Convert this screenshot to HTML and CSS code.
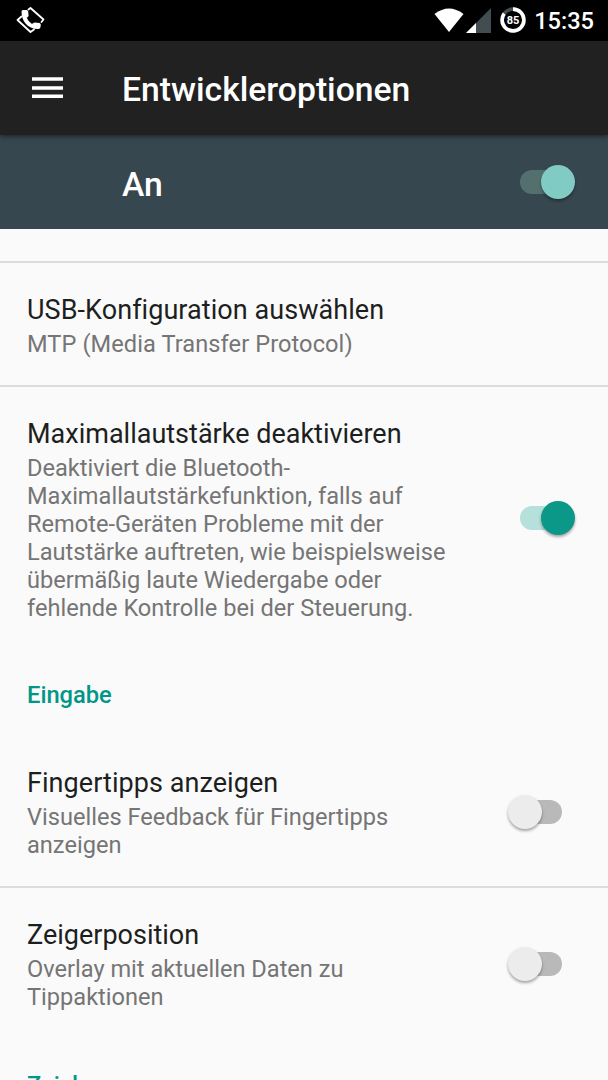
FILE: index.html
```html
<!DOCTYPE html>
<html lang="de">
<head>
<meta charset="utf-8">
<title>Entwickleroptionen</title>
<link rel="stylesheet" href="styles.css">
</head>
<body>
<div class="screen">
  <div class="status">
    <svg class="call-icon" viewBox="0 0 30 28" width="30" height="28">
      <g fill="none" stroke="#fff" stroke-width="1.800" stroke-linejoin="round" stroke-linecap="round">
        <path d="M12.500 3.500 L14.500 2 L27.500 13.500 L25.500 16"/>
        <path d="M5.500 10.500 L1.500 14 L14.500 26 L18 23.500"/>
      </g>
      <path fill="#fff" d="M5.500 5.500 Q5.500 4 7 4 H10.500 Q12 4 12.200 5.500 L12.600 9.500 Q12.600 10.800 10.800 11.800 Q12 15.500 16 18 Q17.500 16.200 19 16.400 L23.500 17 Q25 17.400 24.800 19 L24.300 21.700 Q23.800 23 21.800 23 C11.500 23 5.500 15 5.500 5.500Z"/>
    </svg>
    <div class="status-right">
      <svg class="wifi" viewBox="0 0 30 24" width="30" height="24"><path fill="#fff" d="M.5 6 Q15-5 29.500 6 L15 24Z"/></svg>
      <svg class="signal" viewBox="0 0 25 25" width="25" height="25"><path fill="#434c51" d="M25 0V25H0Z"/><path fill="#fff" d="M10 15V25H0Z"/></svg>
      <div class="battery">
        <svg viewBox="0 0 26 26" width="26" height="26"><circle cx="13" cy="13" r="10.900" fill="none" stroke="#434c51" stroke-width="3.600"/><circle cx="13" cy="13" r="10.900" fill="none" stroke="#fff" stroke-width="3.600" pathLength="100" stroke-dasharray="85 15" transform="rotate(-90 13 13)"/></svg>
        <span class="battery-level">85</span>
      </div>
      <span class="clock">15:35</span>
    </div>
  </div>
  <header class="toolbar">
    <svg class="menu" viewBox="0 0 31 22" width="31" height="22"><path fill="#fff" d="M0 .3H31V3.800H0ZM0 9.300H31V12.800H0ZM0 17.500H31V21H0Z"/></svg>
    <h1 class="heading">Entwickleroptionen</h1>
  </header>
  <div class="master">
    <span class="heading">An</span>
    <span class="switch on light"><i class="thumb"></i></span>
  </div>
  <main class="list">
    <section class="row">
      <div class="copy">
        <div class="title wide">USB-Konfiguration auswählen</div>
        <div class="summary wide">MTP (Media Transfer Protocol)</div>
      </div>
    </section>
    <section class="row">
      <div class="copy">
        <div class="title">Maximallautstärke deaktivieren</div>
        <div class="summary">Deaktiviert die Bluetooth-<br>Maximallautstärkefunktion, falls auf<br>Remote-Geräten Probleme mit der<br>Lautstärke auftreten, wie beispielsweise<br>übermäßig laute Wiedergabe oder<br>fehlende Kontrolle bei der Steuerung.</div>
      </div>
      <span class="switch on"><i class="thumb"></i></span>
    </section>
    <h2 class="category">Eingabe</h2>
    <section class="row first">
      <div class="copy">
        <div class="title wide">Fingertipps anzeigen</div>
        <div class="summary">Visuelles Feedback für Fingertipps<br>anzeigen</div>
      </div>
      <span class="switch off"><i class="thumb"></i></span>
    </section>
    <section class="row">
      <div class="copy">
        <div class="title">Zeigerposition</div>
        <div class="summary">Overlay mit aktuellen Daten zu<br>Tippaktionen</div>
      </div>
      <span class="switch off"><i class="thumb"></i></span>
    </section>
    <h2 class="category">Zeichnung</h2>
  </main>
</div>
</body>
</html>
```

FILE: styles.css
```css
* { box-sizing: border-box; }
body { margin: 0; background: #fafafa; font-family: Roboto, "Liberation Sans", sans-serif; }
.screen { height: 1080px; overflow: hidden; display: flex; flex-direction: column; }

.status { flex: none; height: 41px; background: #000; color: #fff; display: flex; justify-content: space-between; padding: 0 14px 0 16px; }
.call-icon { margin-top: 6px; }
.status-right { display: flex; align-items: flex-start; }
.wifi { margin-top: 8px; }
.signal { margin: 8px 0 0 2px; }
.battery { position: relative; width: 26px; height: 26px; margin: 7px 0 0 9px; }
.battery svg { display: block; }
.battery-level { position: absolute; inset: 0; text-align: center; font-size: 11px; line-height: 28px; font-weight: 700; }
.clock { margin-left: 8px; font-size: 23.6px; line-height: 43px; font-weight: 500; }

.toolbar { flex: none; height: 94px; background: #212121; color: #fff; display: flex; align-items: center; padding-left: 32px; position: relative; box-shadow: 0 1px 5px rgba(0,0,0,.55); }
.menu { flex: none; }
.heading { margin: 0; font-size: 33.7px; line-height: 40px; font-weight: 500; color: #fff; }
.toolbar .heading { margin-left: 59px; padding-top: 3px; }
.master { flex: none; height: 94px; background: #37474f; display: flex; align-items: center; justify-content: space-between; padding: 0 33px 0 122px; }
.master .heading { padding-top: 5px; }

.list { flex: 1; padding-top: 32px; }
.row { display: flex; align-items: center; justify-content: space-between; padding: 29px 33px 27px 27px; border-top: 2px solid #dcdcdc; }
.row.first { border-top-color: transparent; }
.title { font-size: 27px; line-height: 36px; color: #1d1f1f; white-space: nowrap; }
.title.wide { letter-spacing: .06px; }
.summary { margin-top: 2px; font-size: 23.6px; line-height: 28px; color: #757575; white-space: nowrap; }
.summary.wide { letter-spacing: .08px; }
.category { margin: 0; height: 85px; padding: 30px 27px 0; font-size: 23.7px; line-height: 32px; font-weight: 500; color: #009688; }
.row + .category:last-child { padding-top: 31px; }

.switch { flex: none; display: flex; align-items: center; width: 56px; height: 36px; position: relative; }
.switch::before { content: ""; width: 42px; height: 24px; border-radius: 12px; background: #b9b9b9; }
.switch.on::before { margin-left: 1px; background: #b6e0dc; }
.row .switch.on { margin-bottom: 2px; }
.switch.light::before { background: #53706f; }
.switch.off { width: 68px; }
.switch.off::before { margin-left: 13px; }
.thumb { position: absolute; top: 1px; right: 0; width: 34px; height: 34px; border-radius: 50%; background: #0b9888; box-shadow: 0 2px 3px rgba(0,0,0,.35); }
.light .thumb { background: #80cbc4; }
.off .thumb { left: 1px; background: #ececec; }
```
